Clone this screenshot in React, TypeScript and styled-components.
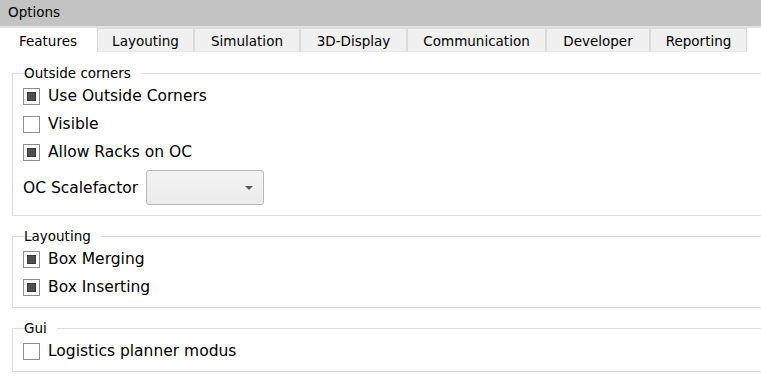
import styled, { createGlobalStyle } from 'styled-components';

const GlobalStyle = createGlobalStyle`
  html, body {
    margin: 0;
    padding: 0;
    background: #fff;
  }
  body {
    font-family: 'DejaVu Sans', 'Liberation Sans', sans-serif;
    color: #000;
    overflow: hidden;
  }
`;

const Window = styled.div`
  width: 761px;
  height: 377px;
  display: flex;
  flex-direction: column;
  overflow: hidden;
`;

const TitleBar = styled.div`
  height: 26px;
  line-height: 24px;
  padding-left: 8px;
  font-size: 13.5px;
  background: #c3c3c3;
  border-bottom: 2px solid #e2e2e2;
`;

const TabBar = styled.div`
  display: flex;
  height: 24px;
`;

const Tab = styled.div<{ $w: number; $active?: boolean }>`
  width: ${(p) => p.$w}px;
  box-sizing: border-box;
  display: flex;
  align-items: center;
  justify-content: center;
  font-size: 13.5px;
  background: ${(p) => (p.$active ? '#fff' : '#f0f0f0')};
  border: 1px solid ${(p) => (p.$active ? '#fff' : '#dadada')};
  border-left-width: ${(p) => (p.$active ? 0 : 1)}px;
  border-bottom-color: ${(p) => (p.$active ? '#fff' : '#e8e8e8')};
  padding-top: 1px;
`;

const Pane = styled.div`
  flex: 1;
  padding: 14px 0 0 12px;
  display: flex;
  flex-direction: column;
  gap: 13px;
`;

const Group = styled.fieldset`
  margin: 0;
  padding: 2px 0 6px 10px;
  border: 1px solid #dcdcdc;
  border-right: none;
  min-width: 0;
`;

const Legend = styled.legend`
  font-size: 13.5px;
  line-height: 14px;
  padding: 0 1px;
  margin-left: 9px;
  position: relative;
  left: -9px;
`;

const Row = styled.div<{ $h?: number }>`
  height: ${(p) => p.$h ?? 28}px;
  display: flex;
  align-items: center;
  gap: 8px;
  font-size: 15.5px;
`;

const Box = styled.span<{ $checked?: boolean }>`
  width: 17px;
  height: 17px;
  box-sizing: border-box;
  border: 1px solid #8e8e8e;
  background: #fff;
  display: flex;
  align-items: center;
  justify-content: center;

  &::after {
    content: '';
    display: ${(p) => (p.$checked ? 'block' : 'none')};
    width: 9px;
    height: 9px;
    box-sizing: border-box;
    background: #4f4f4f;
    border: 1px solid #3a3a3a;
  }
`;

const Combo = styled.div`
  width: 118px;
  height: 35px;
  box-sizing: border-box;
  border: 1px solid #b8b8b8;
  border-radius: 3px;
  background: linear-gradient(#f3f3f3, #ebebeb);
  display: flex;
  align-items: center;
  justify-content: flex-end;
  padding-right: 10px;

  &::after {
    content: '';
    width: 0;
    height: 0;
    border-left: 4px solid transparent;
    border-right: 4px solid transparent;
    border-top: 4px solid #5a5a5a;
  }
`;

const tabs = [
  { label: 'Features', w: 97 },
  { label: 'Layouting', w: 97 },
  { label: 'Simulation', w: 106 },
  { label: '3D-Display', w: 107 },
  { label: 'Communication', w: 139 },
  { label: 'Developer', w: 104 },
  { label: 'Reporting', w: 97 },
];

function Check({ label, checked }: { label: string; checked?: boolean }) {
  return (
    <Row>
      <Box $checked={checked} />
      <span>{label}</span>
    </Row>
  );
}

export default function App() {
  return (
    <Window>
      <GlobalStyle />
      <TitleBar>Options</TitleBar>
      <TabBar>
        {tabs.map((t, i) => (
          <Tab key={t.label} $w={t.w} $active={i === 0}>
            {t.label}
          </Tab>
        ))}
      </TabBar>
      <Pane>
        <Group>
          <Legend>Outside corners</Legend>
          <Check label='Use Outside Corners' checked />
          <Check label='Visible' />
          <Check label='Allow Racks on OC' checked />
          <Row $h={43}>
            <span>OC Scalefactor</span>
            <Combo />
          </Row>
        </Group>
        <Group>
          <Legend>Layouting</Legend>
          <Check label='Box Merging' checked />
          <Check label='Box Inserting' checked />
        </Group>
        <Group>
          <Legend>Gui</Legend>
          <Check label='Logistics planner modus' />
        </Group>
      </Pane>
    </Window>
  );
}
